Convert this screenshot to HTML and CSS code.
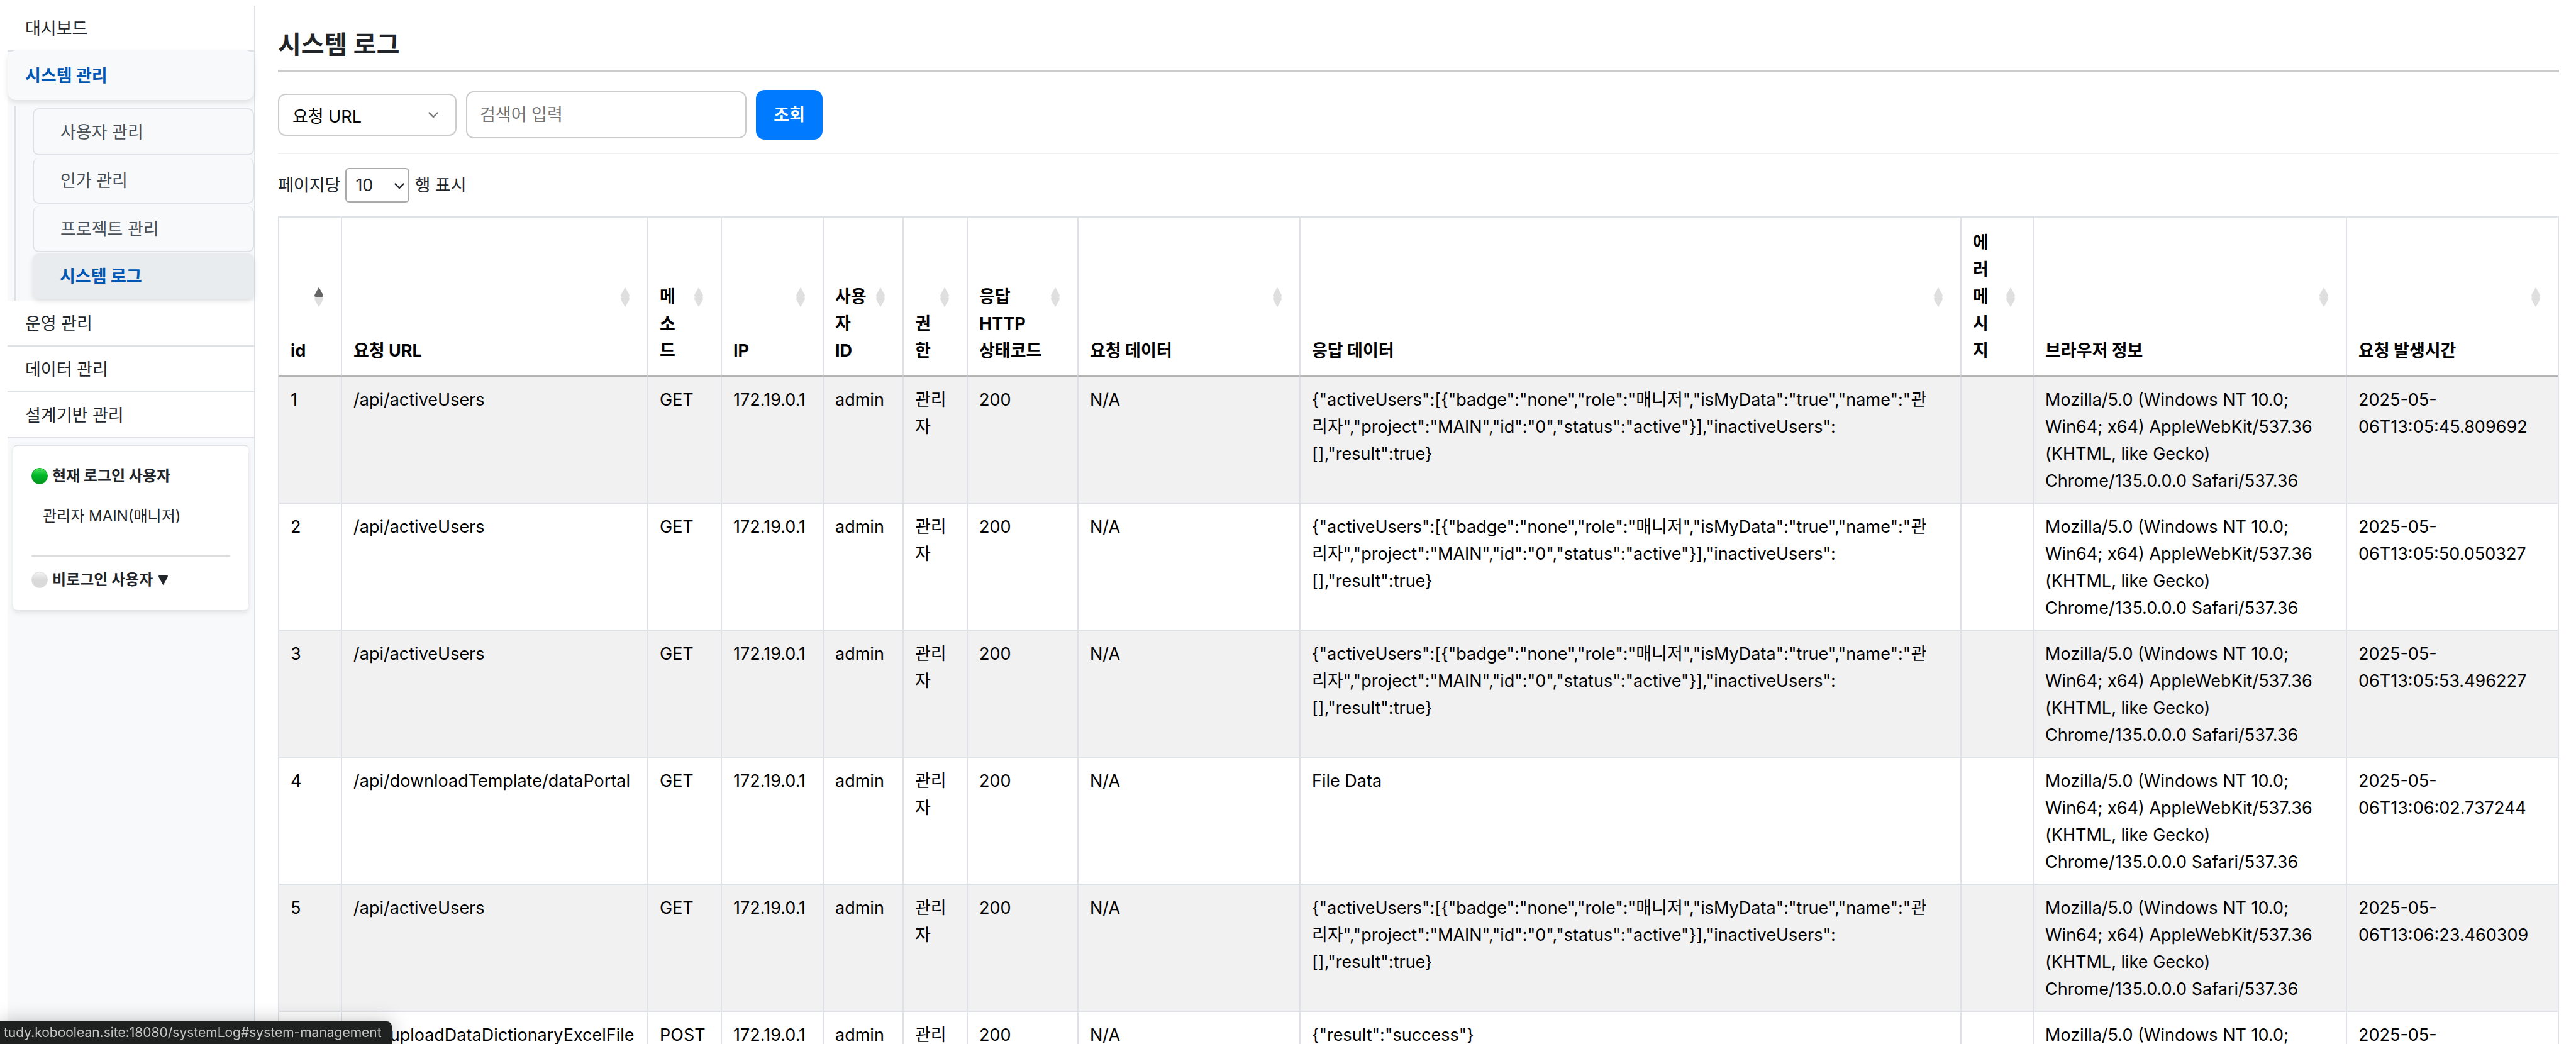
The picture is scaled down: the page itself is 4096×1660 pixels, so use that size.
FILE: index.html
```html
<!DOCTYPE html>
<html lang="ko">
<head>
<meta charset="utf-8">
<title>시스템 로그</title>
<link rel="stylesheet" href="styles.css">
</head>
<body>
<svg class="defs" aria-hidden="true">
  <symbol id="up" viewBox="0 0 14 15"><path d="M6.2 1Q7 -.6 7.8 1L13.6 11.6Q14.8 15 12 15H2Q-.8 15 .4 11.6Z"/></symbol>
  <symbol id="down" viewBox="0 0 14 15"><path d="M6.2 14Q7 15.6 7.8 14L13.6 3.4Q14.8 0 12 0H2Q-.8 0 .4 3.4Z"/></symbol>
  <symbol id="chevron" viewBox="0 0 16 10"><path d="M1.5 1.5L8 8L14.5 1.5" fill="none" stroke="currentColor" stroke-width="2.4" stroke-linecap="round" stroke-linejoin="round"/></symbol>
</svg>
<div class="layout">
  <aside class="sidebar">
    <nav>
      <a class="menu" href="#dashboard">대시보드</a>
      <div class="group">
        <a class="menu menu-open" href="#system-management">시스템 관리</a>
        <div class="submenu">
          <a class="sub sub-first" href="#users">사용자 관리</a>
          <a class="sub" href="#auth">인가 관리</a>
          <a class="sub" href="#projects">프로젝트 관리</a>
          <a class="sub sub-active" href="#system-log" aria-current="page">시스템 로그</a>
        </div>
      </div>
      <a class="menu" href="#operation">운영 관리</a>
      <a class="menu" href="#data">데이터 관리</a>
      <a class="menu" href="#design">설계기반 관리</a>
    </nav>
    <section class="users">
      <h2 class="users-title"><span class="dot dot-on"></span>현재 로그인 사용자</h2>
      <p class="user">관리자 MAIN(매니저)</p>
      <h2 class="users-title users-off"><span class="dot dot-off"></span>비로그인 사용자<svg class="caret"><use href="#down"/></svg></h2>
    </section>
  </aside>

  <main class="main">
    <h1 class="title">시스템 로그</h1>
    <form class="search">
      <div class="select-wrap">
        <select class="field field-select" aria-label="검색 항목"><option>요청 URL</option></select>
        <svg class="chevron"><use href="#chevron"/></svg>
      </div>
      <input class="field keyword" type="text" placeholder="검색어 입력" aria-label="검색어 입력">
      <button class="submit" type="button">조회</button>
    </form>
    <div class="length">
      <label for="rows">페이지당</label>
      <div class="select-wrap">
        <select class="rows" id="rows"><option>10</option></select>
        <svg class="chevron chevron-rows"><use href="#chevron"/></svg>
      </div>
      <span>행 표시</span>
    </div>

    <table class="log">
      <colgroup>
        <col class="c-id"><col class="c-url"><col class="c-method"><col class="c-ip"><col class="c-user"><col class="c-role"><col class="c-status"><col class="c-request"><col><col class="c-error"><col class="c-browser"><col class="c-time">
      </colgroup>
      <thead>
        <tr>
          <th aria-sort="ascending"><button type="button">id</button><svg class="sort sort-asc"><use href="#up" width="14" height="15"/><use class="dim" href="#down" y="16" width="14" height="15"/></svg></th>
          <th><button type="button">요청 URL</button><svg class="sort"><use href="#up" width="14" height="15"/><use href="#down" y="16" width="14" height="15"/></svg></th>
          <th><button type="button">메소드</button><svg class="sort"><use href="#up" width="14" height="15"/><use href="#down" y="16" width="14" height="15"/></svg></th>
          <th><button type="button">IP</button><svg class="sort"><use href="#up" width="14" height="15"/><use href="#down" y="16" width="14" height="15"/></svg></th>
          <th><button type="button">사용자 ID</button><svg class="sort"><use href="#up" width="14" height="15"/><use href="#down" y="16" width="14" height="15"/></svg></th>
          <th><button type="button">권한</button><svg class="sort"><use href="#up" width="14" height="15"/><use href="#down" y="16" width="14" height="15"/></svg></th>
          <th><button type="button">응답 HTTP<br>상태코드</button><svg class="sort"><use href="#up" width="14" height="15"/><use href="#down" y="16" width="14" height="15"/></svg></th>
          <th><button type="button">요청 데이터</button><svg class="sort"><use href="#up" width="14" height="15"/><use href="#down" y="16" width="14" height="15"/></svg></th>
          <th><button type="button">응답 데이터</button><svg class="sort"><use href="#up" width="14" height="15"/><use href="#down" y="16" width="14" height="15"/></svg></th>
          <th><button type="button">에러 메시지</button><svg class="sort"><use href="#up" width="14" height="15"/><use href="#down" y="16" width="14" height="15"/></svg></th>
          <th><button type="button">브라우저 정보</button><svg class="sort"><use href="#up" width="14" height="15"/><use href="#down" y="16" width="14" height="15"/></svg></th>
          <th><button type="button">요청 발생시간</button><svg class="sort"><use href="#up" width="14" height="15"/><use href="#down" y="16" width="14" height="15"/></svg></th>
        </tr>
      </thead>
      <tbody>
        <tr>
          <td>1</td><td>/api/activeUsers</td><td>GET</td><td>172.19.0.1</td><td>admin</td><td>관리자</td><td>200</td><td>N/A</td>
          <td>{"activeUsers":[{"badge":"none","role":"매니저","isMyData":"true","name":"관<br>리자","project":"MAIN","id":"0","status":"active"}],"inactiveUsers":<br>[],"result":true}</td>
          <td></td><td>Mozilla/5.0 (Windows NT 10.0; Win64; x64) AppleWebKit/537.36 (KHTML, like Gecko) Chrome/135.0.0.0 Safari/537.36</td><td>2025-05-06T13:05:45.809692</td>
        </tr>
        <tr>
          <td>2</td><td>/api/activeUsers</td><td>GET</td><td>172.19.0.1</td><td>admin</td><td>관리자</td><td>200</td><td>N/A</td>
          <td>{"activeUsers":[{"badge":"none","role":"매니저","isMyData":"true","name":"관<br>리자","project":"MAIN","id":"0","status":"active"}],"inactiveUsers":<br>[],"result":true}</td>
          <td></td><td>Mozilla/5.0 (Windows NT 10.0; Win64; x64) AppleWebKit/537.36 (KHTML, like Gecko) Chrome/135.0.0.0 Safari/537.36</td><td>2025-05-06T13:05:50.050327</td>
        </tr>
        <tr>
          <td>3</td><td>/api/activeUsers</td><td>GET</td><td>172.19.0.1</td><td>admin</td><td>관리자</td><td>200</td><td>N/A</td>
          <td>{"activeUsers":[{"badge":"none","role":"매니저","isMyData":"true","name":"관<br>리자","project":"MAIN","id":"0","status":"active"}],"inactiveUsers":<br>[],"result":true}</td>
          <td></td><td>Mozilla/5.0 (Windows NT 10.0; Win64; x64) AppleWebKit/537.36 (KHTML, like Gecko) Chrome/135.0.0.0 Safari/537.36</td><td>2025-05-06T13:05:53.496227</td>
        </tr>
        <tr>
          <td>4</td><td>/api/downloadTemplate/dataPortal</td><td>GET</td><td>172.19.0.1</td><td>admin</td><td>관리자</td><td>200</td><td>N/A</td>
          <td>File Data</td>
          <td></td><td>Mozilla/5.0 (Windows NT 10.0; Win64; x64) AppleWebKit/537.36 (KHTML, like Gecko) Chrome/135.0.0.0 Safari/537.36</td><td>2025-05-06T13:06:02.737244</td>
        </tr>
        <tr>
          <td>5</td><td>/api/activeUsers</td><td>GET</td><td>172.19.0.1</td><td>admin</td><td>관리자</td><td>200</td><td>N/A</td>
          <td>{"activeUsers":[{"badge":"none","role":"매니저","isMyData":"true","name":"관<br>리자","project":"MAIN","id":"0","status":"active"}],"inactiveUsers":<br>[],"result":true}</td>
          <td></td><td>Mozilla/5.0 (Windows NT 10.0; Win64; x64) AppleWebKit/537.36 (KHTML, like Gecko) Chrome/135.0.0.0 Safari/537.36</td><td>2025-05-06T13:06:23.460309</td>
        </tr>
        <tr>
          <td>6</td><td>/api/uploadDataDictionaryExcelFile</td><td>POST</td><td>172.19.0.1</td><td>admin</td><td>관리</td><td>200</td><td>N/A</td>
          <td>{"result":"success"}</td>
          <td></td><td>Mozilla/5.0 (Windows NT 10.0;</td><td>2025-05-</td>
        </tr>
      </tbody>
    </table>
  </main>
</div>
<div class="statusbar">tudy.koboolean.site:18080/systemLog#system-management</div>
</body>
</html>
```
FILE: styles.css
```css
* { box-sizing: border-box; }

body {
  margin: 0;
  height: 100vh;
  overflow: hidden;
  background: #fff;
  color: #212529;
  font: 27px/43px Inter, "Noto Sans CJK KR", sans-serif;
}

button, input, select { font: inherit; }
a { color: inherit; text-decoration: none; }
.defs { position: absolute; width: 0; height: 0; }

.layout { display: flex; height: 100%; }

/* Sidebar */
.sidebar {
  flex: none;
  width: 394px;
  margin: 9px 0 0 12px;
  border-right: 2px solid #dee2e6;
  background: #f8f9fb;
}
.menu {
  display: block;
  padding: 15px 28px 13px;
  border-bottom: 2px solid #dee2e6;
  background: #fff;
}
.menu-open {
  position: relative;
  margin-top: -2px;
  padding: 19px 28px 17px;
  border: 0;
  border-radius: 14px;
  background: #f8f9fb;
  box-shadow: 0 4px 8px rgba(0, 0, 0, .1);
  color: #0056b3;
  font-weight: 700;
}
.submenu {
  display: flex;
  flex-direction: column;
  gap: 4px;
  margin: 9px 0 0 10px;
  padding: 4px 0 3px 27px;
  border-left: 3px solid #dee2e6;
}
.sub {
  padding: 15px 42px 13px;
  border: 2px solid #dee2e6;
  border-top-width: 0;
  border-radius: 10px;
  color: #495057;
}
.sub-first { border-top-width: 2px; }
.sub-active {
  margin-top: -2px;
  border: 0;
  padding: 15px 43px 14px;
  background: #e9ecef;
  box-shadow: 0 4px 8px rgba(0, 0, 0, .1);
  color: #0056b3;
  font-weight: 700;
}

.users {
  margin: 10px 9px 0;
  padding: 26px 29px 27px;
  border-top: 2px solid #dee2e6;
  border-radius: 7px;
  background: #fff;
  box-shadow: 0 4px 9px rgba(0, 0, 0, .1);
  font-size: 24px;
}
.users-title {
  display: flex;
  align-items: center;
  margin: 0;
  font-size: 24px;
  font-weight: 700;
}
.dot {
  width: 26px;
  height: 26px;
  margin-right: 7px;
  border-radius: 50%;
}
.dot-on {
  background: linear-gradient(#4be35f, #00b828 45%, #04951f);
  border: 1px solid #07a023;
}
.dot-off {
  background: linear-gradient(#f4f4f4, #d9d9d9 50%, #dadada);
  border: 1px solid #dcdcdc;
}
.user { margin: 21px 0 0; padding-left: 18px; }
.users-off {
  margin-top: 41px;
  padding-top: 15px;
  border-top: 2px solid #ddd;
}
.caret { width: 15px; height: 16px; margin-left: 9px; fill: #212529; }

/* Main area */
.main { flex: 1; min-width: 0; padding: 41px 27px 0 36px; }
.title {
  margin: 0 0 28px;
  padding-bottom: 10px;
  border-bottom: 4px solid #ccc;
  font-size: 40px;
  line-height: 60px;
  font-weight: 700;
}
.search {
  display: flex;
  align-items: center;
  gap: 15px;
  padding-bottom: 21px;
  border-bottom: 2px solid #f0f0f0;
}
.select-wrap { position: relative; display: flex; }
.field {
  border: 2px solid #ccc;
  border-radius: 12px;
  background: #fff;
}
.field-select {
  appearance: none;
  width: 284px;
  height: 67px;
  padding: 6px 21px 0;
  color: #000;
}
.keyword { width: 446px; height: 75px; padding: 0 20px; }
.keyword::placeholder { color: #757575; opacity: 1; }
.submit {
  width: 106px;
  height: 79px;
  padding: 0;
  border: 0;
  border-radius: 14px;
  background: #007bff;
  color: #fff;
  font-weight: 700;
}
.chevron {
  position: absolute;
  top: 29px;
  right: 29px;
  width: 16px;
  height: 10px;
  color: #777;
  pointer-events: none;
}
.chevron-rows { top: 24px; right: 8px; color: #212529; }
.length {
  display: flex;
  align-items: center;
  gap: 8px;
  padding: 22px 0;
}
.rows {
  appearance: none;
  width: 102px;
  height: 55px;
  padding: 0 14px;
  border: 2px solid #aaa;
  border-radius: 6px;
  background: transparent;
  color: #212529;
}

/* Log table */
.log {
  width: 100%;
  table-layout: fixed;
  border-collapse: separate;
  border-spacing: 0;
  border-top: 2px solid #dee2e6;
  border-right: 2px solid #dee2e6;
  color: #000;
}
.c-id { width: 100px; }
.c-url { width: 487px; }
.c-method { width: 117px; }
.c-ip { width: 162px; }
.c-user { width: 127px; }
.c-role { width: 102px; }
.c-status { width: 176px; }
.c-request { width: 353px; }
.c-error { width: 115px; }
.c-browser { width: 498px; }
.c-time { width: 337px; }

.log th {
  position: relative;
  padding: 18px 52px 18px 18px;
  border-left: 2px solid #dee2e6;
  border-bottom: 2px solid #b3b3b3;
  text-align: left;
  vertical-align: bottom;
}
.log th button {
  display: block;
  width: 100%;
  padding: 0;
  border: 0;
  background: none;
  color: inherit;
  font-weight: 700;
  text-align: left;
}
.sort {
  position: absolute;
  top: 50%;
  right: 28px;
  width: 14px;
  height: 31px;
  margin-top: -15px;
  fill: #dfdfdf;
}
.sort-asc { fill: #666; }
.dim { fill: #dfdfdf; }

.log td {
  padding: 15px 18px 13px;
  border-left: 2px solid #dee2e6;
  border-bottom: 2px solid #dee2e6;
  vertical-align: top;
}
.log tbody tr:nth-child(odd) { background: #f1f1f1; }

/* Link preview in the window corner */
.statusbar {
  position: fixed;
  left: 0;
  bottom: 0;
  padding: 0 16px 0 6px;
  border-top-right-radius: 8px;
  background: #1f2121;
  box-shadow: 0 0 30px rgba(0, 0, 0, .25);
  color: #c4c7c5;
  font-size: 21px;
  line-height: 36px;
}
```
